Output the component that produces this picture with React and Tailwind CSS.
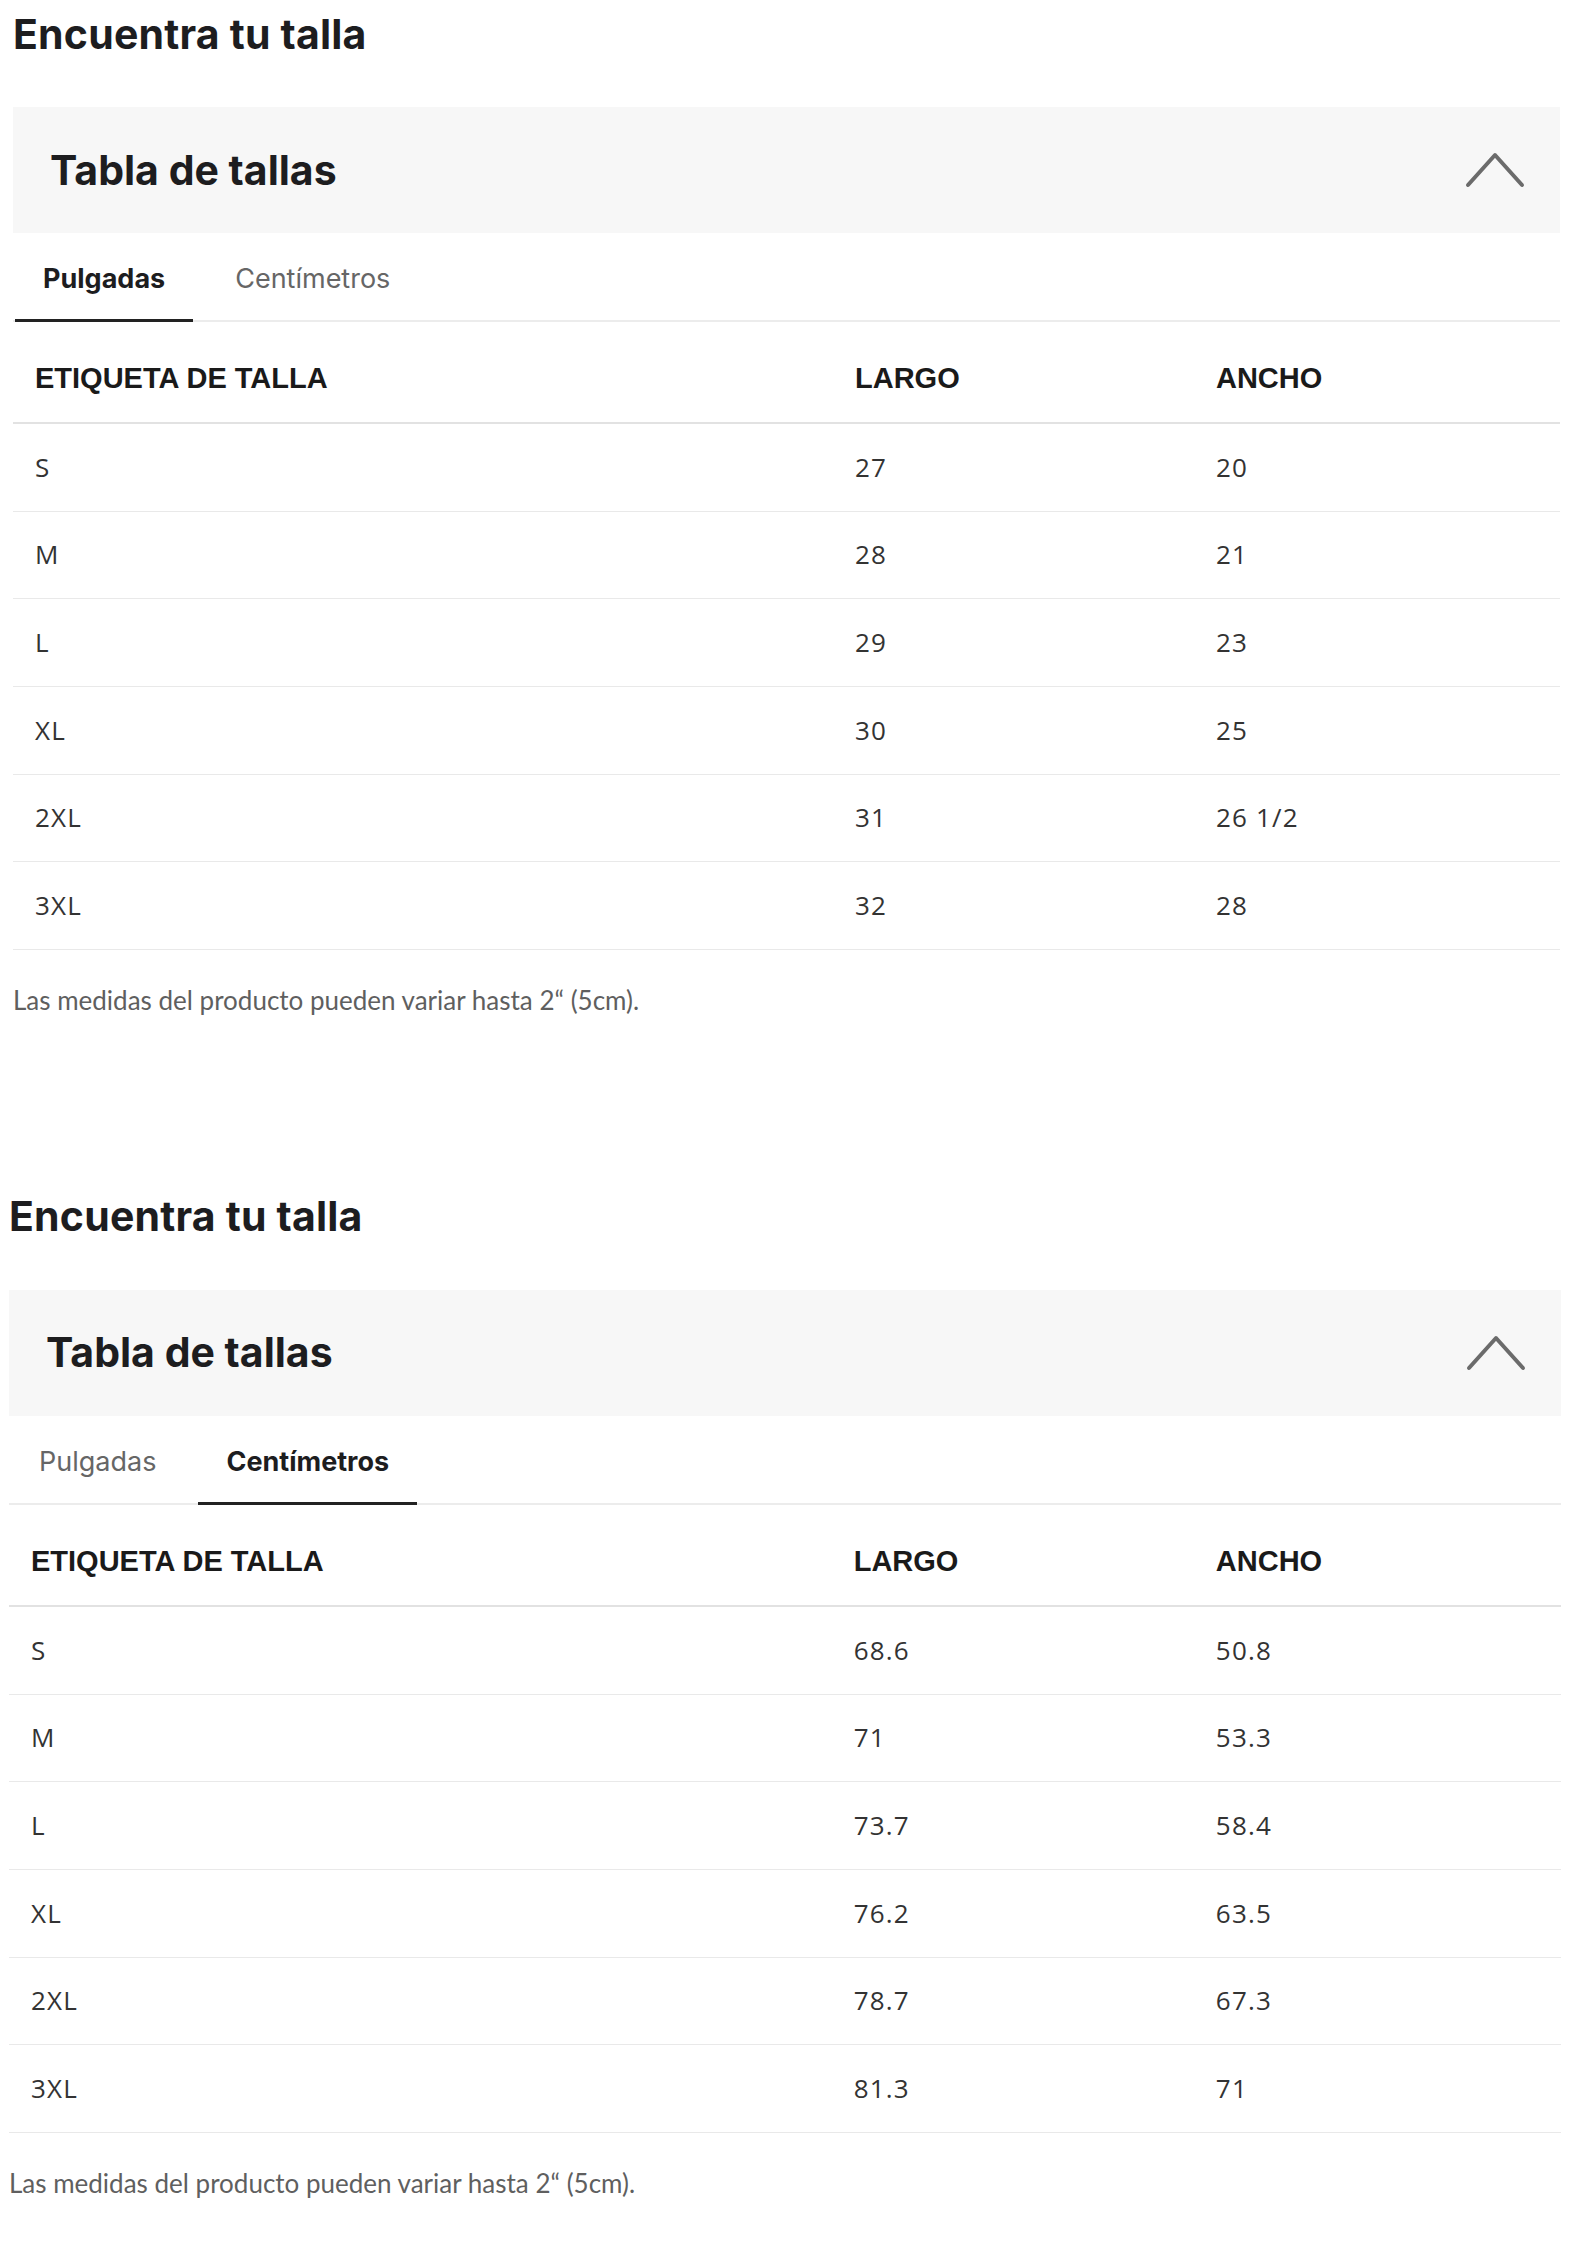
import React, { useState } from 'react';

const inches = [
    ['S', '27', '20'],
    ['M', '28', '21'],
    ['L', '29', '23'],
    ['XL', '30', '25'],
    ['2XL', '31', '26 1/2'],
    ['3XL', '32', '28'],
];

const centimeters = [
    ['S', '68.6', '50.8'],
    ['M', '71', '53.3'],
    ['L', '73.7', '58.4'],
    ['XL', '76.2', '63.5'],
    ['2XL', '78.7', '67.3'],
    ['3XL', '81.3', '71'],
];

const Chevron = () => (
    <svg width="60" height="38" viewBox="0 0 60 38" fill="none">
        <path d="M3 34 L30 4 L57 34" stroke="#6b6b6b" strokeWidth="4" strokeLinecap="round" strokeLinejoin="round" />
    </svg>
);

const SizeGuide = ({ initialUnit, className }) => {
    const [unit, setUnit] = useState(initialUnit);
    const rows = unit === 'in' ? inches : centimeters;

    return (
        <section className={`flex flex-col ${className}`}>
            {/* Heading */}
            <div className="h-[68px] flex items-center">
                <h2 className="font-['Inter',sans-serif] font-bold text-[41px] leading-none text-[#1d1d1f] tracking-[0.2px]">
                    Encuentra tu talla
                </h2>
            </div>

            {/* Accordion header */}
            <div className="mt-[39px] h-[126px] bg-[#f7f7f7] flex items-center justify-between pl-[37px] pr-[35px]">
                <h3 className="font-['Inter',sans-serif] font-bold text-[41px] leading-none text-[#1d1d1f]">
                    Tabla de tallas
                </h3>
                <Chevron />
            </div>

            {/* Unit tabs */}
            <div className="h-[89px] flex items-stretch gap-[14px] border-b-2 border-[#ececec] pl-[2px]">
                <button
                    type="button"
                    onClick={() => setUnit('in')}
                    className={`px-[28px] pt-[6px] -mb-[2px] border-b-[3px] font-['Inter',sans-serif] text-[27px] ${unit === 'in' ? 'font-bold text-[#1d1d1f] border-[#222]' : 'font-normal text-[#666] border-transparent'}`}
                >
                    Pulgadas
                </button>
                <button
                    type="button"
                    onClick={() => setUnit('cm')}
                    className={`px-[28px] pt-[6px] -mb-[2px] border-b-[3px] font-['Inter',sans-serif] text-[27px] ${unit === 'cm' ? 'font-bold text-[#1d1d1f] border-[#222]' : 'font-normal text-[#666] border-transparent'}`}
                >
                    Centímetros
                </button>
            </div>

            {/* Table */}
            <div className="grid grid-cols-[53.77%_23.67%_22.56%] h-[102px] items-center pt-[14px] border-b-2 border-[#e2e2e2] pl-[22px] font-['Liberation_Sans',Arial,sans-serif] font-bold text-[29px] text-[#1a1a1a]">
                <div>ETIQUETA DE TALLA</div>
                <div>LARGO</div>
                <div>ANCHO</div>
            </div>
            {rows.map(([label, largo, ancho]) => (
                <div
                    key={label}
                    className="grid grid-cols-[53.77%_23.67%_22.56%] h-[87.67px] items-center border-b border-[#e9e9e9] pl-[22px] font-['Open_Sans',sans-serif] text-[26px] tracking-[1.2px] text-[#333]"
                >
                    <div>{label}</div>
                    <div>{largo}</div>
                    <div>{ancho}</div>
                </div>
            ))}

            {/* Note */}
            <div className="h-[102px] flex items-center">
                <p className="font-['Lato',sans-serif] text-[26px] text-[#5f5f5f]">
                    Las medidas del producto pueden variar hasta 2“ (5cm).
                </p>
            </div>
        </section>
    );
};

export default function App() {
    return (
        <div className="w-[1587px] min-h-[2245px] bg-white">
            <SizeGuide initialUnit="in" className="ml-[13px] w-[1547px] mb-[131px]" />
            <SizeGuide initialUnit="cm" className="ml-[9px] w-[1552px]" />
        </div>
    );
}
